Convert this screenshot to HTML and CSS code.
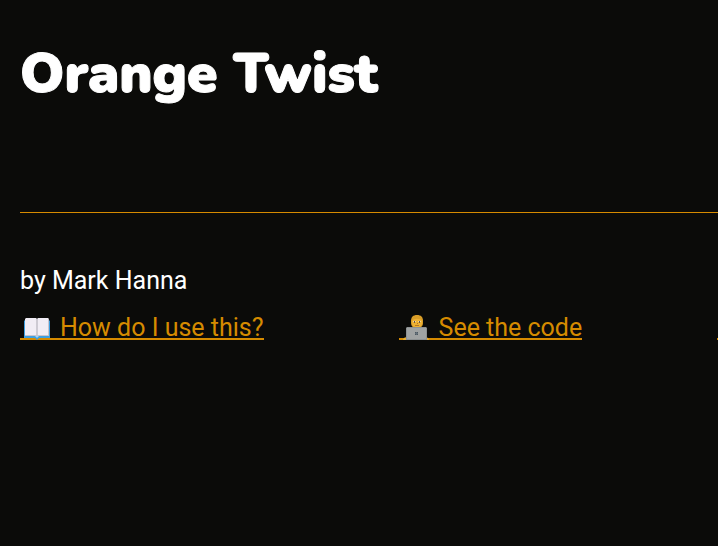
FILE: index.html
```html
<!DOCTYPE html>
<html lang="en">
<head>
<meta charset="utf-8">
<meta name="viewport" content="width=device-width, initial-scale=1">
<title>Orange Twist</title>
<link rel="stylesheet" href="styles.css">
</head>
<body>
<header class="header">
  <h1 class="title">Orange Twist</h1>
</header>
<footer class="footer">
  <p class="author">by Mark Hanna</p>
  <nav class="links">
    <a class="link" href="#help"><svg class="icon" viewBox="0 0 34 28" aria-hidden="true">
      <path fill="#3d9fe0" d="M5 7h24l1 1v17H19l-2 2-2-2H4V8z"/>
      <path fill="#a9d5f0" d="M5 22h24v1H19l-2 2-2-2H5z"/>
      <path fill="#f1edf5" d="M6 5h10l1 1 1-1h10l1 1v16H18l-1 1-1-1H5V6z"/>
      <path fill="#aaa7b2" d="M16.5 6h1v17h-1z"/>
      <path fill="#c9c5cf" d="M5 22h24v1H5zM28 6h1v16h-1z"/>
    </svg><span class="label">How do I use this?</span></a>
    <a class="link" href="#code"><svg class="icon" viewBox="0 0 34 28" aria-hidden="true">
      <path fill="#e5ad35" d="M4 27c0-2 2-3 5-3h16c3 0 5 1 5 3z"/>
      <path fill="#d99e28" d="M12 8c0-4 2-6 6-6s6 2 6 6v2c0 3-2 5-6 5s-6-2-6-5z"/>
      <path fill="#edb133" d="M13 8c1-3 9-3 10 0v2c0 3-2 4-5 4s-5-1-5-4z"/>
      <path fill="#e6d4a8" d="M14 8h3v1h-3zM19 8h3v1h-3z"/>
      <path fill="#695541" d="M15 8h1v2h-1zM20 8h1v2h-1z"/>
      <path fill="#b97720" d="M16 12h4v1h-4zM18 10h1v1h-1z"/>
      <path fill="#8d9192" d="M7 15l1-1h19l1 1v12H7z"/>
      <path fill="#a0a3a3" d="M8 15h19v11H8z"/>
      <path fill="#4d5961" d="M16 19h1v1h-1zM18 19h1v1h-1zM16 21h1v1h-1zM18 21h1v1h-1z"/>
      <path fill="#65717a" d="M17 19h1v3h-1zM16 20h3v1h-3z"/>
    </svg><span class="label">See the code</span></a>
    <a class="link" href="#more"><svg class="icon" viewBox="0 0 34 28" aria-hidden="true"></svg></a>
  </nav>
</footer>
</body>
</html>
```
FILE: styles.css
```css
* {
  box-sizing: border-box;
}

body {
  margin: 0;
  padding: 40px 0 40px 20px;
  overflow-x: hidden;
  background: #0b0b09;
  color: #fff;
  font: 25px/32px Roboto, sans-serif;
}

.header {
  padding-bottom: 104px;
  border-bottom: 1px solid #d68b00;
}

.title {
  margin: 0;
  font: 900 55px/68px Nunito, Lato, sans-serif;
  -webkit-text-stroke: 1px #fff;
  stroke-linejoin: round;
}

.footer {
  padding-top: 52px;
}

.author {
  margin: 0;
}

.links {
  display: flex;
  gap: 135px;
  margin-top: 12px;
}

.link {
  display: flex;
  flex: none;
  align-items: flex-start;
  height: 32px;
  color: #d68b00;
  text-decoration: none;
  background: linear-gradient(#d68b00, #d68b00) 0 29px / 100% 2px no-repeat;
}

.icon {
  width: 34px;
  height: 28px;
  margin-top: 4px;
}

.label {
  margin-left: 6px;
  line-height: 38px;
}
```
